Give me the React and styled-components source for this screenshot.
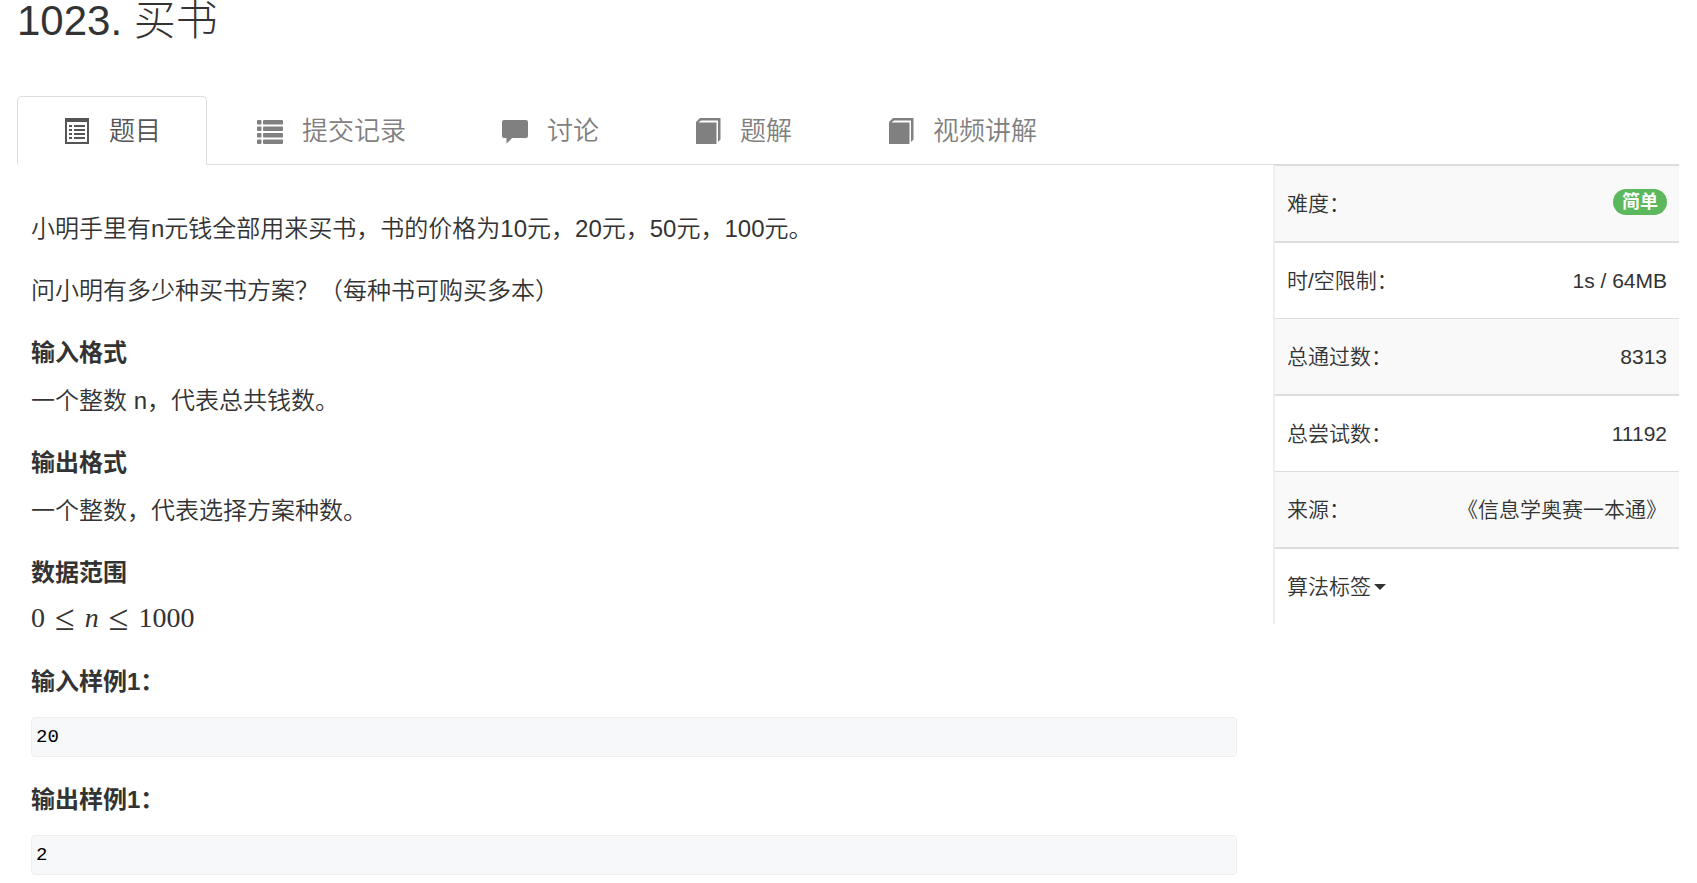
import React, { useState } from "react";
import styled, { createGlobalStyle } from "styled-components";

const GlobalStyle = createGlobalStyle`
  * {
    box-sizing: border-box;
  }

  body {
    margin: 0;
    background: #fff;
    color: #333;
    font-family: "Liberation Sans", "Noto Sans CJK SC", sans-serif;
    font-weight: 350;
    text-spacing-trim: space-all;
  }
`;

const Page = styled.div`
  padding: 0 18px 0 17px;
`;

const Title = styled.h1`
  margin: 0;
  font-size: 42px;
  font-weight: 300;
  line-height: 42px;
`;

const Tabs = styled.nav`
  display: flex;
  align-items: flex-end;
  gap: 3px;
  margin-top: 54px;
  border-bottom: 1px solid #ddd;
`;

const Tab = styled.a`
  display: flex;
  align-items: center;
  gap: 19px;
  height: 69px;
  margin-bottom: -1px;
  padding: 0 45px 0 46px;
  border: 1px solid ${({ $active }) => ($active ? "#ddd" : "transparent")};
  border-bottom-color: ${({ $active }) => ($active ? "#fff" : "transparent")};
  border-radius: 5px 5px 0 0;
  color: ${({ $active }) => ($active ? "#555" : "#808080")};
  font-size: 26px;
  line-height: 36px;
  text-decoration: none;
`;

const Icon = styled.svg`
  width: 26px;
  height: 26px;
  fill: currentColor;
`;

const Content = styled.div`
  display: grid;
  grid-template-columns: minmax(0, 1fr) 406px;
  align-items: start;
`;

const Problem = styled.main`
  padding: 47px 36px 0 14px;
  font-size: 24px;
  line-height: 34px;
`;

const Text = styled.p`
  margin: 0 0 28px;
`;

const Heading = styled.h2`
  margin: 0 0 ${({ $sample }) => ($sample ? 18 : 14)}px;
  font-size: 24px;
  font-weight: 700;
  line-height: 34px;
`;

const Formula = styled.p`
  display: flex;
  align-items: center;
  gap: 10px;
  margin: 0 0 33px;
  font-family: "Liberation Serif", serif;
  font-size: 28px;
  font-weight: 400;
  line-height: 28px;
`;

const Relation = styled.span`
  font-size: 36px;
`;

const Sample = styled.pre`
  margin: 0 0 26px;
  padding: 0 4px;
  border: 1px solid #eee;
  border-radius: 4px;
  background: #f7f8fa;
  color: #000;
  font-family: "Liberation Mono", monospace;
  font-size: 19px;
  font-weight: 400;
  line-height: 38px;
`;

const InfoTable = styled.table`
  width: 100%;
  border-left: 2px solid #eee;
  border-spacing: 0;
  font-size: 21px;
  line-height: 30px;
`;

const InfoRow = styled.tr`
  th,
  td {
    height: 77px;
    padding: 0 12px;
    border-top: 2px solid #ddd;
  }

  th {
    font-weight: inherit;
    text-align: left;
  }

  td {
    text-align: right;
  }

  &:nth-child(odd) > * {
    height: 76px;
    border-top-width: 1px;
    background: #f9f9f9;
  }
`;

const Badge = styled.span`
  display: inline-block;
  padding: 0 9px;
  border-radius: 13px;
  background: #5cb85c;
  color: #fff;
  font-size: 18px;
  font-weight: 700;
  line-height: 26px;
  vertical-align: text-bottom;
`;

const TagToggle = styled.button`
  display: flex;
  align-items: center;
  gap: 3px;
  padding: 0;
  border: none;
  background: none;
  color: inherit;
  font: inherit;
  cursor: pointer;
`;

const Caret = styled.span`
  border-top: 6px solid currentColor;
  border-right: 6px solid transparent;
  border-left: 6px solid transparent;
`;

const ListAltIcon = () => (
  <Icon viewBox="0 0 26 26" aria-hidden="true">
    <path fillRule="evenodd" d="M1 0h24v26H1zM3 4v20h20V4z" />
    <path d="M5 7h3v2H5zM10 7h11v2H10zM5 11h3v2H5zM10 11h11v2H10zM5 15h3v2H5zM10 15h11v2H10zM5 19h3v2H5zM10 19h11v2H10z" />
  </Icon>
);

const ListIcon = () => (
  <Icon viewBox="0 0 26 26" aria-hidden="true">
    {[2, 8.5, 15, 21.5].map((y) => (
      <g key={y}>
        <rect x="0" y={y} width="4.5" height="4.4" rx="1" />
        <rect x="6" y={y} width="20" height="4.4" rx="1" />
      </g>
    ))}
  </Icon>
);

const CommentIcon = () => (
  <Icon viewBox="0 0 26 26" aria-hidden="true">
    <path d="M2 2h22a2 2 0 0 1 2 2v14a2 2 0 0 1-2 2H10l-5.500 5.800V20H2a2 2 0 0 1-2-2V4a2 2 0 0 1 2-2z" />
  </Icon>
);

const BookIcon = () => (
  <Icon viewBox="0 0 26 26" aria-hidden="true">
    <path d="M5 0h20.500v21.500L23 24V2.500H6L3.500 4.500H21.500V26H1V4z" />
  </Icon>
);

const TABS = [
  { id: "problem", label: "题目", icon: <ListAltIcon /> },
  { id: "submissions", label: "提交记录", icon: <ListIcon /> },
  { id: "discussion", label: "讨论", icon: <CommentIcon /> },
  { id: "solution", label: "题解", icon: <BookIcon /> },
  { id: "video", label: "视频讲解", icon: <BookIcon /> },
];

const App = () => {
  const [activeTab, setActiveTab] = useState("problem");

  return (
    <>
      <GlobalStyle />
      <Page>
        <Title>1023. 买书</Title>
        <Tabs>
          {TABS.map(({ id, label, icon }) => (
            <Tab
              key={id}
              href={`#${id}`}
              $active={id === activeTab}
              onClick={() => setActiveTab(id)}
            >
              {icon}
              {label}
            </Tab>
          ))}
        </Tabs>
        <Content>
          <Problem>
            <Text>小明手里有n元钱全部用来买书，书的价格为10元，20元，50元，100元。</Text>
            <Text>问小明有多少种买书方案？（每种书可购买多本）</Text>
            <Heading>输入格式</Heading>
            <Text>一个整数 n，代表总共钱数。</Text>
            <Heading>输出格式</Heading>
            <Text>一个整数，代表选择方案种数。</Text>
            <Heading>数据范围</Heading>
            <Formula>
              <span>0</span>
              <Relation>≤</Relation>
              <i>n</i>
              <Relation>≤</Relation>
              <span>1000</span>
            </Formula>
            <Heading $sample>输入样例1：</Heading>
            <Sample>20</Sample>
            <Heading $sample>输出样例1：</Heading>
            <Sample>2</Sample>
          </Problem>
          <InfoTable>
            <tbody>
              <InfoRow>
                <th scope="row">难度：</th>
                <td><Badge>简单</Badge></td>
              </InfoRow>
              <InfoRow>
                <th scope="row">时/空限制：</th>
                <td>1s / 64MB</td>
              </InfoRow>
              <InfoRow>
                <th scope="row">总通过数：</th>
                <td>8313</td>
              </InfoRow>
              <InfoRow>
                <th scope="row">总尝试数：</th>
                <td>11192</td>
              </InfoRow>
              <InfoRow>
                <th scope="row">来源：</th>
                <td>《信息学奥赛一本通》</td>
              </InfoRow>
              <InfoRow>
                <th scope="row" colSpan={2}>
                  <TagToggle type="button">
                    算法标签
                    <Caret />
                  </TagToggle>
                </th>
              </InfoRow>
            </tbody>
          </InfoTable>
        </Content>
      </Page>
    </>
  );
};

export default App;
